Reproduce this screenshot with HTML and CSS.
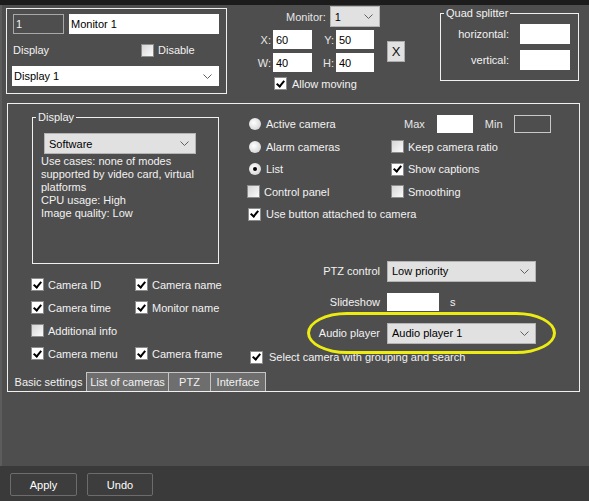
FILE: index.html
```html
<!DOCTYPE html>
<html lang="en">
<head>
    <meta charset="UTF-8">
    <meta name="viewport" content="width=device-width, initial-scale=1.0">
    <title>Monitor settings</title>
    <link rel="stylesheet" href="styles.css">
</head>
<body>
    <div class="topbar"></div>
    <div class="content">
        <div class="top">
            <div class="monitor-box">
                <div class="row">
                    <input class="field num" value="1">
                    <input class="field name" value="Monitor 1">
                </div>
                <div class="row display-row">
                    <span class="field-label">Display</span>
                    <label class="check"><span class="box"></span>Disable</label>
                </div>
                <div class="select white display-select">
                    <span>Display 1</span>
                    <svg class="arrow" width="9" height="5" viewBox="0 0 9 5"><polyline points="0.5,0.5 4.5,4.5 8.5,0.5"/></svg>
                </div>
            </div>

            <div class="coords">
                <div class="monitor-row">
                    <span>Monitor:</span>
                    <div class="select monitor-select">
                        <span>1</span>
                        <svg class="arrow" width="9" height="5" viewBox="0 0 9 5"><polyline points="0.5,0.5 4.5,4.5 8.5,0.5"/></svg>
                    </div>
                </div>
                <div class="xywh">
                    <div class="xywh-grid">
                        <span class="lbl">X:</span><input class="field" value="60">
                        <span class="lbl">Y:</span><input class="field" value="50">
                        <span class="lbl">W:</span><input class="field" value="40">
                        <span class="lbl">H:</span><input class="field" value="40">
                    </div>
                    <button class="close-btn">X</button>
                </div>
                <label class="check allow"><span class="box on"></span>Allow moving</label>
            </div>

            <fieldset class="group quad">
                <legend>Quad splitter</legend>
                <div class="quad-grid">
                    <span>horizontal:</span><input class="field">
                    <span>vertical:</span><input class="field">
                </div>
            </fieldset>
        </div>

        <div class="panel">
            <div class="panel-body">
                <div class="left">
                    <fieldset class="group display">
                        <legend>Display</legend>
                        <div class="display-body">
                            <div class="select software">
                                <span>Software</span>
                                <svg class="arrow" width="9" height="5" viewBox="0 0 9 5"><polyline points="0.5,0.5 4.5,4.5 8.5,0.5"/></svg>
                            </div>
                            <p class="desc">Use cases: none of modes<br>supported by video card, virtual<br>platforms<br>CPU usage: High<br>Image quality: Low</p>
                        </div>
                    </fieldset>
                    <div class="opts">
                        <label class="check"><span class="box on"></span>Camera ID</label>
                        <label class="check"><span class="box on"></span>Camera name</label>
                        <label class="check"><span class="box on"></span>Camera time</label>
                        <label class="check"><span class="box on"></span>Monitor name</label>
                        <label class="check"><span class="box"></span>Additional info</label>
                        <span></span>
                        <label class="check"><span class="box on"></span>Camera menu</label>
                        <label class="check"><span class="box on"></span>Camera frame</label>
                    </div>
                </div>

                <div class="right">
                    <div class="modes">
                        <label class="check radio-row"><span class="radio"></span>Active camera</label>
                        <div class="maxmin">
                            <span>Max</span>
                            <input class="field small">
                            <span class="min-lbl">Min</span>
                            <input class="field small empty">
                        </div>
                        <label class="check radio-row"><span class="radio"></span>Alarm cameras</label>
                        <label class="check"><span class="box"></span>Keep camera ratio</label>
                        <label class="check radio-row"><span class="radio on"></span>List</label>
                        <label class="check"><span class="box on"></span>Show captions</label>
                        <label class="check"><span class="box"></span>Control panel</label>
                        <label class="check"><span class="box"></span>Smoothing</label>
                        <label class="check use-btn"><span class="box on"></span>Use button attached to camera</label>
                    </div>
                    <div class="ptz">
                        <span class="lbl">PTZ control</span>
                        <div class="select ptz-select">
                            <span>Low priority</span>
                            <svg class="arrow" width="9" height="5" viewBox="0 0 9 5"><polyline points="0.5,0.5 4.5,4.5 8.5,0.5"/></svg>
                        </div>
                        <span class="lbl">Slideshow</span>
                        <div class="slideshow">
                            <input class="field slide-input">
                            <span>s</span>
                        </div>
                        <span class="lbl">Audio player</span>
                        <div class="select ptz-select">
                            <span>Audio player 1</span>
                            <svg class="arrow" width="9" height="5" viewBox="0 0 9 5"><polyline points="0.5,0.5 4.5,4.5 8.5,0.5"/></svg>
                        </div>
                    </div>
                    <label class="check select-cam"><span class="box on"></span>Select camera with grouping and search</label>
                </div>
            </div>

            <div class="tabs">
                <span class="tab active">Basic settings</span>
                <span class="tab">List of cameras</span>
                <span class="tab">PTZ</span>
                <span class="tab">Interface</span>
            </div>

            <div class="highlight"></div>
        </div>
    </div>

    <div class="footer">
        <button class="btn">Apply</button>
        <button class="btn">Undo</button>
    </div>
</body>
</html>
```

FILE: styles.css
```css
body {
    margin: 0;
    width: 589px;
    height: 501px;
    overflow: hidden;
    display: flex;
    flex-direction: column;
    background-color: #4e4e4e;
    color: #f2f2f2;
    font-family: "Liberation Sans", Arial, sans-serif;
    font-size: 11px;
}

input,
button {
    font-family: inherit;
    font-size: 11px;
}

.topbar {
    height: 5px;
    background-color: #1c1c1c;
}

.content {
    flex: 1;
    box-shadow: inset 2px 0 #5c5c5c;
}

.top {
    display: flex;
    align-items: flex-start;
    height: 98px;
}

/* generic controls */
.field {
    box-sizing: border-box;
    height: 19px;
    border: none;
    padding: 0 3px;
    background-color: #fff;
    color: #000;
    outline: none;
}

.select {
    box-sizing: border-box;
    display: flex;
    align-items: center;
    justify-content: space-between;
    height: 21px;
    padding: 0 6px 0 4px;
    background-color: #e1e1e1;
    border: 1px solid #b4b4b4;
    color: #000;
}

.select.white {
    background-color: #fff;
    border-color: #fff;
}

.arrow polyline {
    fill: none;
    stroke: #606060;
    stroke-width: 1;
}

.check {
    display: flex;
    align-items: center;
    gap: 4px;
    white-space: nowrap;
}

.box {
    box-sizing: border-box;
    display: flex;
    align-items: center;
    justify-content: center;
    width: 13px;
    height: 13px;
    flex: none;
    border: 1px solid #8c8c8c;
    background: linear-gradient(135deg, #d6d6d6, #fbfbfb);
}

.box.on {
    background: #fff;
}

.box.on::after {
    content: "";
    width: 3px;
    height: 6px;
    margin-top: -2px;
    border: solid #000;
    border-width: 0 2px 2px 0;
    transform: rotate(40deg);
}

.radio {
    display: flex;
    align-items: center;
    justify-content: center;
    width: 12px;
    height: 12px;
    flex: none;
    border-radius: 50%;
    background: radial-gradient(circle at 40% 40%, #ffffff, #c9c9c9);
}

.radio.on::after {
    content: "";
    width: 4px;
    height: 4px;
    border-radius: 50%;
    background-color: #000;
}

.group {
    margin: 0;
    padding: 0;
    box-sizing: border-box;
    border: 1px solid #f0f0f0;
}

.group legend {
    margin-left: 3px;
    padding: 0 2px;
    line-height: 14px;
}

/* monitor box */
.monitor-box {
    box-sizing: border-box;
    width: 221px;
    height: 86px;
    margin: 3px 0 0 6px;
    padding: 5px 7px 0 6px;
    border: 1px solid #f0f0f0;
}

.row {
    display: flex;
    align-items: center;
    gap: 5px;
}

.num {
    width: 51px;
    height: 20px;
    background: transparent;
    border: 1px solid #a8a8a8;
    color: #f2f2f2;
    padding: 0 2px;
}

.name {
    width: 150px;
    height: 20px;
    padding: 0 2px;
}

.display-row {
    height: 24px;
    margin-top: 4px;
    gap: 0;
}

.field-label {
    width: 128px;
}

.display-select {
    width: 207px;
    height: 20px;
    margin: 4px 0 0 -1px;
    padding-left: 1px;
}

/* position / size */
.coords {
    width: 150px;
    margin: 1px 0 0 28px;
}

.monitor-row {
    display: flex;
    align-items: center;
    gap: 4px;
    padding-left: 31px;
    color: #e6e6e6;
}

.monitor-select {
    width: 50px;
}

.xywh {
    display: flex;
    align-items: center;
    margin-top: 3px;
}

.xywh-grid {
    display: grid;
    grid-template-columns: 18px 39px 24px 38px;
    grid-auto-rows: 19px;
    row-gap: 4px;
    align-items: center;
}

.xywh-grid .lbl {
    text-align: right;
    padding-right: 2px;
    color: #e6e6e6;
}

.close-btn {
    width: 21px;
    height: 21px;
    margin-left: 13px;
    padding: 0;
    border: 1px solid #adadad;
    background-color: #e1e1e1;
    color: #111;
    font-size: 13px;
}

.allow {
    margin-top: 5px;
    padding-left: 19px;
    gap: 5px;
}

/* quad splitter */
.quad {
    width: 139px;
    height: 75px;
    margin: 1px 0 0 35px;
}

.quad-grid {
    display: grid;
    grid-template-columns: 62px 50px;
    grid-auto-rows: 20px;
    column-gap: 11px;
    row-gap: 6px;
    align-items: center;
    padding: 4px 0 0 6px;
}

.quad-grid span {
    text-align: right;
}

.quad-grid .field {
    height: 20px;
}

/* main panel */
.panel {
    position: relative;
    box-sizing: border-box;
    height: 289px;
    margin: 0 9px 0 7px;
    border: 1px solid #f0f0f0;
    display: flex;
    flex-direction: column;
}

.panel-body {
    display: flex;
    height: 268px;
}

.left {
    box-sizing: border-box;
    width: 232px;
    padding: 6px 0 0 24px;
}

.display {
    width: 187px;
    height: 154px;
}

.display-body {
    padding: 9px 0 0 8px;
}

.software {
    width: 152px;
    margin-left: 3px;
}

.desc {
    margin: 1px 0 0;
    line-height: 13px;
    white-space: nowrap;
}

.opts {
    display: grid;
    grid-template-columns: 104px auto;
    grid-auto-rows: 23px;
    align-items: center;
    margin: 9px 0 0 -1px;
}

.right {
    flex: 1;
    padding-top: 9px;
}

.modes {
    display: grid;
    grid-template-columns: 144px auto;
    grid-auto-rows: 22.5px;
    align-items: center;
    margin-left: 7px;
}

.radio-row {
    padding-left: 2px;
    gap: 5px;
}

.use-btn {
    grid-column: span 2;
    padding-left: 1px;
    gap: 5px;
}

.maxmin {
    display: flex;
    align-items: center;
    padding-left: 13px;
    color: #e6e6e6;
}

.small {
    width: 36px;
    height: 18px;
    margin-left: 12px;
}

.min-lbl {
    margin-left: 12px;
}

.small.empty {
    width: 37px;
    margin-left: 11px;
    background: transparent;
    border: 1px solid #c8c8c8;
}

.ptz {
    display: grid;
    grid-template-columns: 140px 149px;
    grid-auto-rows: 31px;
    column-gap: 7px;
    align-items: center;
    margin-top: 30px;
}

.ptz .lbl {
    text-align: right;
}

.ptz-select {
    width: 149px;
}

.slideshow {
    display: flex;
    align-items: center;
    gap: 11px;
}

.slide-input {
    width: 52px;
    height: 18px;
}

.select-cam {
    height: 17px;
    padding-left: 10px;
    gap: 6px;
}

/* tabs */
.tabs {
    display: flex;
    height: 19px;
    margin-left: 2px;
}

.tab {
    box-sizing: border-box;
    line-height: 18px;
    text-align: center;
    border: 1px solid #c4c4c4;
    border-bottom: none;
    background-color: #6e6e6e;
    margin-left: -1px;
    white-space: nowrap;
}

.tab.active {
    width: 77px;
    margin-left: 0;
    border-color: transparent;
    background: none;
}

.tab:nth-child(2) {
    width: 83px;
}

.tab:nth-child(3) {
    width: 43px;
}

.tab:nth-child(4) {
    width: 56px;
}

/* yellow marker round the audio player */
.highlight {
    position: absolute;
    left: 299px;
    top: 208px;
    width: 249px;
    height: 42px;
    box-sizing: border-box;
    border: 3px solid #ecec12;
    border-radius: 40px / 21px;
    pointer-events: none;
}

/* footer */
.footer {
    box-sizing: border-box;
    height: 35px;
    display: flex;
    align-items: flex-start;
    gap: 10px;
    padding: 7px 0 0 10px;
    background-color: #3a3a3a;
}

.btn {
    width: 67px;
    height: 23px;
    border: 1px solid #6c6c6c;
    border-radius: 2px;
    background-color: #3d3d3d;
    color: #fff;
}

.btn + .btn {
    width: 66px;
}
```
